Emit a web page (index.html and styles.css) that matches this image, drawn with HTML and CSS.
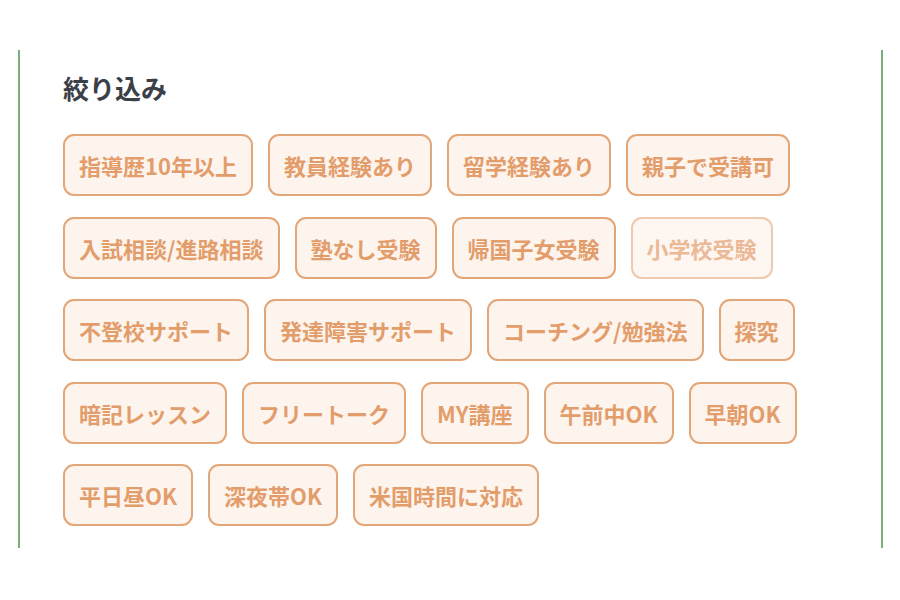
FILE: index.html
```html
<!DOCTYPE html>
<html lang="ja">
<head>
<meta charset="utf-8">
<link rel="stylesheet" href="styles.css">
</head>
<body>
<section class="panel">
  <h2 class="title">絞り込み</h2>
  <div class="tags">
    <span class="tag">指導歴10年以上</span>
    <span class="tag">教員経験あり</span>
    <span class="tag">留学経験あり</span>
    <span class="tag">親子で受講可</span>
    <span class="tag">入試相談/進路相談</span>
    <span class="tag">塾なし受験</span>
    <span class="tag">帰国子女受験</span>
    <span class="tag tag-dim">小学校受験</span>
    <span class="tag">不登校サポート</span>
    <span class="tag">発達障害サポート</span>
    <span class="tag">コーチング/勉強法</span>
    <span class="tag">探究</span>
    <span class="tag">暗記レッスン</span>
    <span class="tag">フリートーク</span>
    <span class="tag">MY講座</span>
    <span class="tag">午前中OK</span>
    <span class="tag">早朝OK</span>
    <span class="tag">平日昼OK</span>
    <span class="tag">深夜帯OK</span>
    <span class="tag">米国時間に対応</span>
  </div>
</section>
</body>
</html>
```
FILE: styles.css
```css
html, body {
  margin: 0;
  padding: 0;
  background: #ffffff;
}
body {
  font-family: "Noto Sans CJK JP", "Noto Sans", sans-serif;
}
.panel {
  box-sizing: border-box;
  margin: 50px 0 0 18px;
  width: 865px;
  height: 498px;
  border-left: 2px solid #7aae7a;
  border-right: 2px solid #7aae7a;
  padding: 20px 40px 0 43px;
}
.title {
  margin: 0 0 28px 0;
  font-size: 26px;
  line-height: 36px;
  font-weight: 700;
  color: #3b4048;
}
.tags {
  display: flex;
  flex-wrap: wrap;
  gap: 20.5px 15px;
  align-items: flex-start;
}
.tag {
  box-sizing: border-box;
  height: 62px;
  display: inline-flex;
  align-items: center;
  padding: 0 14px;
  border: 2px solid #e2a678;
  border-radius: 11px;
  background: #fdf4ee;
  color: #e39d6b;
  font-size: 22px;
  font-weight: 700;
  white-space: nowrap;
}
.tag-dim {
  border-color: #efc9ad;
  color: #ebb996;
  background: #fdf6f1;
}
```
